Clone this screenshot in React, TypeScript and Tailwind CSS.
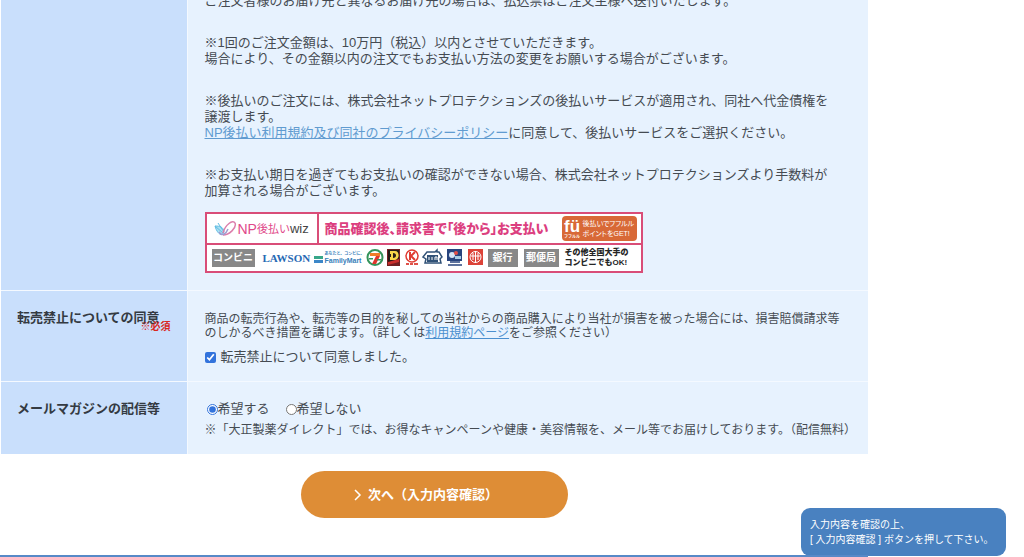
import type { ReactNode } from "react";

function Row({ title, required, children }: { title?: string; required?: boolean; children: ReactNode }) {
  return (
    <tr className="border-b border-[#f4f9ff] last:border-b-0">
      <th scope="row" className="w-[186px] border-r border-[#f4f9ff] bg-[#c9dffc] px-4 pt-[19px] text-left align-top font-bold text-[#343a42]">
        {title}
        {required && <span className="-mt-[5px] block text-right text-[10px] leading-3 text-[#d9281e]">※必須</span>}
      </th>
      <td className="bg-[#e7f2fe] pr-4 pl-[17px] align-top">{children}</td>
    </tr>
  );
}

function StoreLogos() {
  return (
    <svg className="h-5 w-[120px] shrink-0" viewBox="0 0 120 20" aria-hidden="true">
      <circle cx="9" cy="9.500" r="7.500" fill="#fff" stroke="#35945b" strokeWidth="2" />
      <path d="M4 5h10v3H4z" fill="#ef7d28" />
      <path d="M10 8h4l-4 8H6z" fill="#df372d" />
      <path d="M3 10h4v1.500H3zM11 11h4v1.500h-4z" fill="#35945b" />
      <rect x="21" y="1" width="13" height="17" fill="#711e20" />
      <path d="M22 2h11v11l-11 4z" fill="#241b17" />
      <path fillRule="evenodd" d="M24 3h5c5 0 5 9-1 9h-4V9h1V6h-1zM27 5v5c4 0 4-5 0-5z" fill="#f6d54a" />
      <path d="M22 14l11-3v3l-11 3z" fill="#c92e2b" />
      <circle cx="46" cy="8" r="6" fill="#fff" stroke="#df3c32" strokeWidth="1.500" />
      <path d="M44 4v8M49 4l-4 4 4 4" fill="none" stroke="#df3c32" strokeWidth="2" />
      <path d="M40 16h3m1 0h3m1 0h4" fill="none" stroke="#df5148" strokeWidth="2" />
      <path d="M57 9l4-5h8l2-2v2h2l3 5-2 2 1 4H59l1-4z" fill="#fff" stroke="#315277" strokeWidth="1.500" />
      <path d="M61 7h11v7H61z" fill="#315277" />
      <path d="M63 9v3m3-3v3m3 0V9h2v3" fill="none" stroke="#fff" />
      <path d="M81 1h15v12H81z" fill="#28447e" />
      <circle cx="86" cy="7" r="3" fill="#d7e7f6" /><circle cx="90" cy="5" r="2" fill="#e45147" />
      <path d="M89 8h6v3h-6z" fill="#a8cce4" />
      <path d="M84 14h10M82 17h14" stroke="#28447e" strokeWidth="1.500" />
      <path d="M102 1h15v16h-15z" fill="#dc4338" />
      <circle cx="109.500" cy="9" r="5.500" fill="none" stroke="#fff" />
      <path d="M109.500 3v12M105 8h9M107 5v7m5-7v7" stroke="#fff" />
    </svg>
  );
}

function PaymentBanner() {
  return (
    <div className="mt-[13px] flex w-[438px] max-w-full flex-col overflow-hidden border-2 border-[#d94d78] bg-white whitespace-nowrap">
      <div className="flex h-[31px] items-center border-b-2 border-[#d94d78]">
        <div className="flex h-full w-28 shrink-0 items-center border-r-2 border-[#d94d78] pl-[6px] text-[#df498a]">
          <svg className="mr-px h-5 w-6 shrink-0" viewBox="0 0 24 20" fill="none" aria-hidden="true">
            <path d="M2 7c5 0 8 1 9 5-1 7-7 3-9-5z" fill="#aadff1" stroke="#62bee3" />
            <path d="M5 4l6 9m-9-6l8 7" stroke="#62bee3" />
            <path d="M10 14C12 6 20 0 22 4c2 5-6 12-12 12" stroke="#dc7eab" strokeWidth="1.500" />
            <path d="M6 13c3 5 7 2 9-3" stroke="#a19bd0" strokeWidth="1.500" />
          </svg>
          <span className="text-[14px]">NP</span><span className="text-[11px]">後払い</span><span className="text-[13px] text-[#444]">wiz</span>
        </div>
        <strong className="w-[243px] shrink-0 pl-[6px] text-[13px] font-black text-[#dc3f7f] [font-feature-settings:'palt']">商品確認後、請求書で「後から」お支払い</strong>
        <div className="flex h-[25px] w-[75px] shrink-0 items-center overflow-hidden rounded-sm bg-[#d86937] pl-[2px] text-white">
          <div className="flex w-[17px] shrink-0 flex-col items-center font-bold">
            <span className="text-[17px] leading-[15px]">fü</span>
            <span className="text-[4px] leading-[5px]">フフルル</span>
          </div>
          <div className="pl-[2px] text-[7px] leading-[10px] [font-feature-settings:'palt']">後払いでフフルル<br />ポイントをGET!</div>
        </div>
      </div>
      <div className="flex h-[26px] items-center pl-[5px] font-bold">
        <span className="flex h-[18px] w-[43px] shrink-0 items-center justify-center bg-[#888] text-[10px] text-white">コンビニ</span>
        <span className="ml-2 w-[47px] shrink-0 font-['Liberation_Serif',serif] text-[11px] text-[#2769b4]">LAWSON</span>
        <div className="ml-1 flex shrink-0 items-center">
          <svg className="mt-1 h-2 w-[9px]" viewBox="0 0 9 8" aria-hidden="true"><path d="M0 0h9v3H0z" fill="#38a789" /><path d="M0 4h9v3H0z" fill="#3c87c8" /></svg>
          <div className="ml-[2px] w-[39px] text-[#3780ba]"><span className="block text-[4px] leading-[6px]">あなたと、コンビに、</span><span className="block font-['Liberation_Sans',sans-serif] text-[7px] leading-2">FamilyMart</span></div>
        </div>
        <div className="ml-[2px]"><StoreLogos /></div>
        <span className="ml-[2px] flex h-[18px] w-[30px] shrink-0 items-center justify-center bg-[#888] text-[10px] text-white">銀行</span>
        <span className="ml-[6px] flex h-[18px] w-[35px] shrink-0 items-center justify-center bg-[#888] text-[10px] text-white">郵便局</span>
        <span className="ml-[6px] text-[8px] leading-[10px] font-black text-[#252525]">その他全国大手の<br />コンビニでもOK!</span>
      </div>
    </div>
  );
}

export default function App() {
  return (
    <div className="min-h-screen overflow-hidden bg-white font-['Liberation_Sans','Noto_Sans_CJK_JP',sans-serif] text-[13px] leading-4 text-[#454b52]">
      <main className="max-w-[868px]">
        <form onSubmit={(e) => e.preventDefault()}>
          <div className="pl-px">
            <table className="w-full border-collapse">
              <tbody>
                <Row>
                  <div className="-mt-[7px] space-y-[26px]">
                    <p>ご注文者様のお届け先と異なるお届け先の場合は、払込票はご注文主様へ送付いたします。</p>
                    <p>※1回のご注文金額は、10万円（税込）以内とさせていただきます。<br />場合により、その金額以内の注文でもお支払い方法の変更をお願いする場合がございます。</p>
                    <p>※後払いのご注文には、株式会社ネットプロテクションズの後払いサービスが適用され、同社へ代金債権を<br />譲渡します。<br /><a href="#policy" className="text-[#609bd0] underline">NP後払い利用規約及び同社のプライバシーポリシー</a>に同意して、後払いサービスをご選択ください。</p>
                    <p>※お支払い期日を過ぎてもお支払いの確認ができない場合、株式会社ネットプロテクションズより手数料が<br />加算される場合がございます。</p>
                  </div>
                  <div className="pb-[17px]"><PaymentBanner /></div>
                </Row>
                <Row title="転売禁止についての同意" required>
                  <div className="pt-[21px] pb-4">
                    <p className="text-[12px] leading-[14px]">商品の転売行為や、転売等の目的を秘しての当社からの商品購入により当社が損害を被った場合には、損害賠償請求等<br />のしかるべき措置を講じます。（詳しくは<a href="#terms" className="text-[#4a8fcf] underline">利用規約ページ</a>をご参照ください）</p>
                    <label className="mt-[9px] flex items-center gap-[5px]"><input type="checkbox" defaultChecked className="size-[11px] accent-[#3273dc]" />転売禁止について同意しました。</label>
                  </div>
                </Row>
                <Row title="メールマガジンの配信等">
                  <div className="pt-[19px] pb-[17px]">
                    <div className="flex gap-4 pl-[2px]">
                      <label className="flex items-center"><input type="radio" name="magazine" defaultChecked className="size-[11px] accent-[#3273dc]" />希望する</label>
                      <label className="flex items-center"><input type="radio" name="magazine" className="size-[11px]" />希望しない</label>
                    </div>
                    <p className="mt-[6px] text-[12px] leading-[14px]">※「大正製薬ダイレクト」では、お得なキャンペーンや健康・美容情報を、メール等でお届けしております。（配信無料）</p>
                  </div>
                </Row>
              </tbody>
            </table>
          </div>
          <div className="mt-[17px] flex justify-center">
            <button type="submit" className="flex h-[47px] w-[267px] items-center justify-center gap-[6px] rounded-full bg-[#de8d36] pr-4 font-bold text-white">
              <svg className="h-3 w-2" viewBox="0 0 8 12" fill="none" stroke="currentColor" strokeWidth="1.500" aria-hidden="true"><path d="M1 1l5 5-5 5" /></svg>
              次へ（入力内容確認）
            </button>
          </div>
        </form>
        <hr className="relative z-10 mt-[37px] border-t-2 border-[#5789c7]" />
      </main>
      <aside className="fixed right-[18px] bottom-px w-[205px] rounded-[9px] bg-[#4981c0] px-[9px] py-[9px] text-[10px] leading-[15px] whitespace-nowrap text-white">
        入力内容を確認の上、<br />[ 入力内容確認 ] ボタンを押して下さい。
      </aside>
    </div>
  );
}
